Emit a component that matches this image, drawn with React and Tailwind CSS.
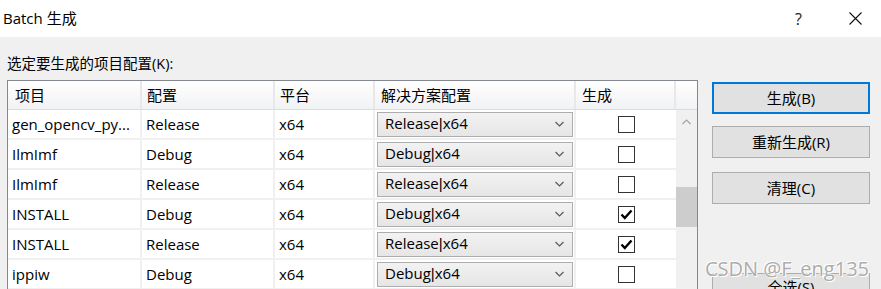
import React from 'react';

const rows = [
  { name: 'gen_opencv_py...', cfg: 'Release', plat: 'x64', build: false },
  { name: 'IlmImf', cfg: 'Debug', plat: 'x64', build: false },
  { name: 'IlmImf', cfg: 'Release', plat: 'x64', build: false },
  { name: 'INSTALL', cfg: 'Debug', plat: 'x64', build: true },
  { name: 'INSTALL', cfg: 'Release', plat: 'x64', build: true },
  { name: 'ippiw', cfg: 'Debug', plat: 'x64', build: false },
];

const Chevron = ({ up = false, className = '' }) => (
  <svg width="9" height="6" viewBox="0 0 9 6" className={className}>
    <polyline
      points={up ? '0.5,5 4.5,1 8.5,5' : '0.5,1 4.5,5 8.5,1'}
      fill="none"
      stroke="currentColor"
      strokeWidth="1.2"
    />
  </svg>
);

const Checkbox = ({ checked }) => (
  <div className="w-[17px] h-[17px] border border-[#333] bg-white flex items-center justify-center">
    {checked && (
      <svg width="13" height="11" viewBox="0 0 13 11">
        <polyline points="1.5,5.5 4.8,9 11.5,1.5" fill="none" stroke="#000" strokeWidth="2.4" />
      </svg>
    )}
  </div>
);

const Combo = ({ cfg, plat }) => (
  <div className="ml-[2px] w-[196px] h-[25px] border border-[#adadad] bg-gradient-to-b from-[#f2f2f2] to-[#e6e6e6] flex items-center pl-[7px] pr-[8px]">
    <span className="flex-1 whitespace-nowrap">
      {cfg}
      <span className="font-['Liberation_Sans']">|</span>
      {plat}
    </span>
    <Chevron className="text-[#5a5a5a]" />
  </div>
);

const Button = ({ children, primary = false, className = '' }) => (
  <div
    className={
      'w-[158px] h-[32px] bg-[#e1e1e1] flex items-center justify-center text-[15px] ' +
      (primary ? 'border-2 border-[#0078d7] ' : 'border border-[#adadad] ') +
      className
    }
  >
    {children}
  </div>
);

export default function App() {
  return (
    <div
      className="relative w-[881px] h-[289px] overflow-hidden bg-[#f0f0f0] text-black text-[15px]"
      style={{ fontFamily: '"Open Sans", "Noto Sans CJK SC", sans-serif' }}
    >
      {/* title bar */}
      <div className="h-[37px] bg-white flex items-center">
        <span className="pl-[3px] text-[15px]">Batch 生成</span>
        <span className="ml-auto mr-[47px] text-[16px] text-[#222]">?</span>
        <svg width="13" height="13" viewBox="0 0 13 13" className="mr-[19px]">
          <path d="M0.5 0.5 L12.5 12.5 M12.5 0.5 L0.5 12.5" stroke="#111" strokeWidth="1.1" />
        </svg>
      </div>

      <div className="flex">
        {/* left side */}
        <div className="pl-[7px]">
          <div className="mt-[17px] h-[20px] leading-[20px] text-[14.5px]">选定要生成的项目配置(K):</div>
          <div className="mt-[6px] w-[691px] border border-[#828790] bg-white">
            {/* header */}
            <div className="flex h-[29px] border-b border-[#dcdcdc] bg-gradient-to-b from-white to-[#f1f2f4]">
              <div className="w-[134px] pl-[7px] flex items-center border-r-2 border-[#e8e8e8]">项目</div>
              <div className="w-[133px] pl-[5px] flex items-center border-r-2 border-[#e8e8e8]">配置</div>
              <div className="w-[100px] pl-[5px] flex items-center border-r-2 border-[#e8e8e8]">平台</div>
              <div className="w-[201px] pl-[6px] flex items-center border-r-2 border-[#e8e8e8]">解决方案配置</div>
              <div className="w-[100px] pl-[6px] flex items-center border-r-2 border-[#e8e8e8]">生成</div>
              <div className="flex-1" />
            </div>
            {/* body */}
            <div className="flex">
              <div className="w-[668px]">
                {rows.map((r, i) => (
                  <div key={i} className="flex h-[30px] border-b-2 border-[#f0f0f0]">
                    <div className="w-[134px] pl-[4px] flex items-center border-r-2 border-[#f0f0f0] whitespace-nowrap">{r.name}</div>
                    <div className="w-[133px] pl-[4px] flex items-center border-r-2 border-[#f0f0f0]">{r.cfg}</div>
                    <div className="w-[100px] pl-[4px] flex items-center border-r-2 border-[#f0f0f0]">{r.plat}</div>
                    <div className="w-[201px] flex items-center border-r-2 border-[#f0f0f0]">
                      <Combo cfg={r.cfg} plat={r.plat} />
                    </div>
                    <div className="w-[100px] flex items-center justify-center">
                      <Checkbox checked={r.build} />
                    </div>
                  </div>
                ))}
              </div>
              {/* scrollbar */}
              <div className="w-[21px] bg-[#f0f0f0] flex flex-col items-center">
                <Chevron up className="mt-[9px] text-[#a3a3a3]" />
                <div className="mt-[62px] w-[21px] h-[40px] bg-[#cdcdcd]" />
              </div>
            </div>
          </div>
        </div>

        {/* right side buttons */}
        <div className="ml-[14px] mt-[45px] flex flex-col">
          <Button primary>生成(B)</Button>
          <Button className="mt-[12px]">重新生成(R)</Button>
          <Button className="mt-[14px]">清理(C)</Button>
          <Button className="mt-[69px] items-start pt-[2px]">全选(S)</Button>
        </div>
      </div>

      {/* watermark */}
      <div
        className="absolute left-[705px] top-[256px] text-[20px] leading-[26px] text-[#acacac]"
        style={{ textShadow: '0 0 1px #fff, 1px 1px 0 #fff, -1px -1px 0 #fff' }}
      >
        CSDN @F_eng135
      </div>
    </div>
  );
}
